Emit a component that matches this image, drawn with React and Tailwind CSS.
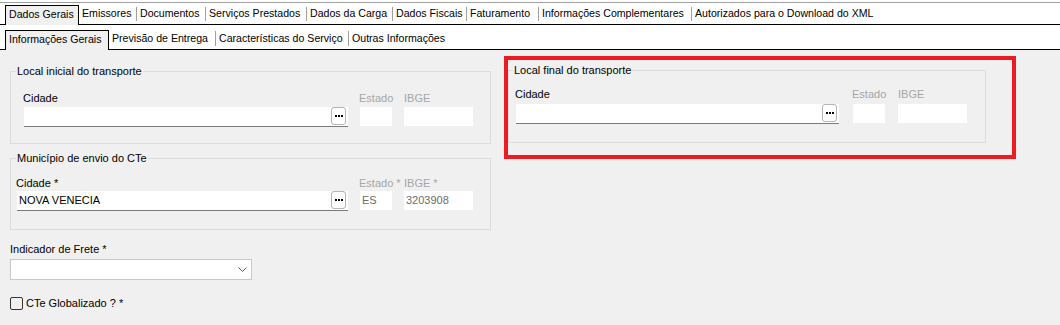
import React from 'react';

const topTabs = [
  { label: 'Emissores', w: 'w-[57px]' },
  { label: 'Documentos', w: 'w-[68px]' },
  { label: 'Serviços Prestados', w: 'w-[100px]' },
  { label: 'Dados da Carga', w: 'w-[85px]' },
  { label: 'Dados Fiscais', w: 'w-[73px]' },
  { label: 'Faturamento', w: 'w-[71px]' },
  { label: 'Informações Complementares', w: 'w-[152px]' },
  { label: 'Autorizados para o Download do XML', w: 'w-[200px]', last: true },
];

const subTabs = [
  { label: 'Previsão de Entrega', w: 'w-[106px]' },
  { label: 'Características do Serviço', w: 'w-[132px]' },
  { label: 'Outras Informações', w: 'w-[120px]', last: true },
];

function TabRow({ active, activeW, tabs, sepClass }) {
  return (
    <div className="flex items-end h-[22px] pl-[5px] border-b border-black bg-white text-[10.6px]">
      <div className={`${activeW} h-[20px] -mb-px bg-[#f0f0f0] border-l border-t border-r border-black flex items-center pl-[3px] pb-[1px] whitespace-nowrap`}>
        {active}
      </div>
      {tabs.map((t) => (
        <div key={t.label} className="flex items-center h-[21px]">
          <div className={`${t.w} pl-[3px] whitespace-nowrap`}>{t.label}</div>
          {!t.last && <span className={`w-px bg-[#a0a0a0] ${sepClass}`} />}
        </div>
      ))}
    </div>
  );
}

function GroupBox({ title, className, legendClass, children }) {
  return (
    <fieldset className={`border border-[#dcdcdc] ${className}`}>
      <legend className={`leading-[14px] px-[1px] ${legendClass}`}>{title}</legend>
      {children}
    </fieldset>
  );
}

function LookupInput({ value, className }) {
  return (
    <div className={`h-[20px] bg-white border-b border-[#7a7a7a] flex items-center justify-between pl-[2px] pr-[2px] ${className}`}>
      <span>{value}</span>
      <button className="w-[15px] h-[18px] rounded-[3px] border border-[#b4b4b4] bg-white flex items-center justify-center gap-[1px] mb-px">
        <span className="w-[2px] h-[2px] bg-black" />
        <span className="w-[2px] h-[2px] bg-black" />
        <span className="w-[2px] h-[2px] bg-black" />
      </button>
    </div>
  );
}

function ReadBox({ value, className }) {
  return (
    <div className={`h-[19px] bg-white flex items-center pl-[2px] text-[#6d6d6d] ${className}`}>{value}</div>
  );
}

function CityRow({ required, city, uf, ibge, inputW, labelGap, gapUf, gapIbge }) {
  const star = required ? ' *' : '';
  return (
    <div className="flex items-start">
      <div className="flex flex-col">
        <span className={`leading-[14px] -ml-px ${labelGap}`}>Cidade{star}</span>
        <LookupInput value={city} className={inputW} />
      </div>
      <div className={`w-[32px] flex flex-col ${gapUf}`}>
        <span className={`leading-[14px] -ml-px text-[#a6a6a6] whitespace-nowrap ${labelGap}`}>Estado{star}</span>
        <ReadBox value={uf} className="w-[32px]" />
      </div>
      <div className={`w-[69px] flex flex-col ${gapIbge}`}>
        <span className={`leading-[14px] text-[#a6a6a6] whitespace-nowrap ${labelGap}`}>IBGE{star}</span>
        <ReadBox value={ibge} className="w-[69px]" />
      </div>
    </div>
  );
}

export default function App() {
  return (
    <div className="w-[1060px] h-[325px] bg-[#f0f0f0] text-black text-[11px] font-['Liberation_Sans',Arial,sans-serif] overflow-hidden">
      <div className="h-[2px] bg-white" />
      <div className="h-px bg-[#a0a0a0]" />
      <TabRow active="Dados Gerais" activeW="w-[74px]" tabs={topTabs} sepClass="h-[14px]" />
      <div className="pt-[3px] bg-white">
        <TabRow active="Informações Gerais" activeW="w-[104px]" tabs={subTabs} sepClass="h-[15px]" />
      </div>

      <div className="flex pl-[10px] gap-[13px]">
        {/* left column */}
        <div className="w-[481px] flex flex-col">
          <GroupBox title="Local inicial do transporte" className="mt-[14px] pb-[16px] pl-[13px]" legendClass="-ml-[8px]">
            <div className="pt-[13px]">
              <CityRow inputW="w-[324px]" labelGap="mb-[2px]" gapUf="ml-[12px]" gapIbge="ml-[12px]" />
            </div>
          </GroupBox>

          <GroupBox title="Município de envio do CTe" className="mt-[7px] pb-[18px] pl-[6px]" legendClass="-ml-px">
            <div className="pt-[11px]">
              <CityRow required city="NOVA VENECIA" uf="ES" ibge="3203908" inputW="w-[331px]" labelGap="mb-px" gapUf="ml-[12px]" gapIbge="ml-[12px]" />
            </div>
          </GroupBox>

          <span className="mt-[12px] leading-[14px]">Indicador de Frete *</span>
          <div className="mt-[3px] w-[242px] h-[21px] bg-white border border-[#c8c8c8] flex items-center justify-end pr-[4px]">
            <svg width="9" height="5" viewBox="0 0 9 5" fill="none">
              <polyline points="0.5,0.5 4.5,4.5 8.5,0.5" stroke="#606060" strokeWidth="1" />
            </svg>
          </div>

          <label className="mt-[16px] flex items-center gap-[3px]">
            <span className="w-[13px] h-[13px] rounded-[2px] border border-[#333333]" />
            <span className="leading-[14px]">CTe Globalizado ? *</span>
          </label>
        </div>

        {/* right column, highlighted */}
        <div className="mt-[6px] w-[512px] h-[103px] border-4 border-[#ed1c24] pt-[3px]">
          <GroupBox title="Local final do transporte" className="w-[478px] pb-[18px] pl-[7px]" legendClass="-ml-[3px]">
            <div className="pt-[10px]">
              <CityRow inputW="w-[323px]" labelGap="mb-[3px]" gapUf="ml-[14px]" gapIbge="ml-[13px]" />
            </div>
          </GroupBox>
        </div>
      </div>
    </div>
  );
}
